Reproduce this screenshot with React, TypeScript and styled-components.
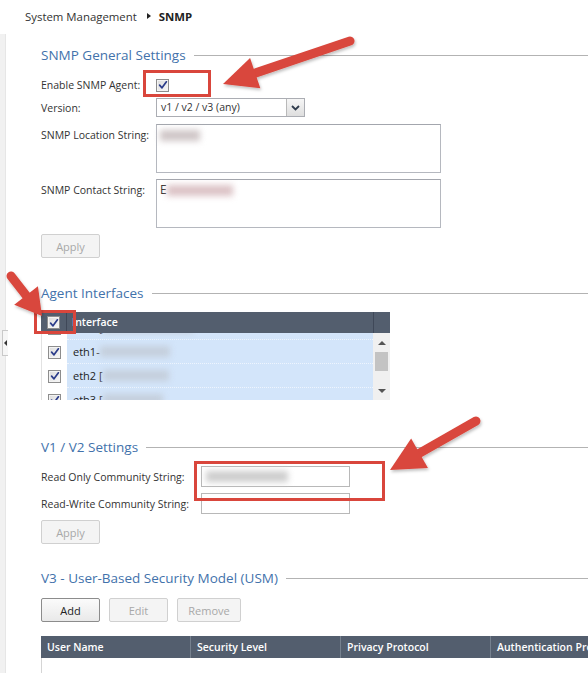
import React from "react"
import styled, { createGlobalStyle } from "styled-components"

const interfaces = [
    {id: 0, name: "eth0 [", hidden: 90},
    {id: 1, name: "eth1-", hidden: 70},
    {id: 2, name: "eth2 [", hidden: 66},
    {id: 3, name: "eth3 [", hidden: 60},
]

const usmColumns = ["User Name", "Security Level", "Privacy Protocol", "Authentication Protocol"]

const CheckMark = () => (
    <svg width="10" height="10" viewBox="0 0 10 10">
        <path d="M1.6 5.2 L4 7.8 L8.4 1.8" stroke="#2b3c8a" strokeWidth="1.7" fill="none" strokeLinecap="round" strokeLinejoin="round" />
    </svg>
)

const Check = () => (
    <CheckBox><CheckMark /></CheckBox>
)

const Arrow = ({ x1, y1, x2, y2, len, half }: { x1: number, y1: number, x2: number, y2: number, len: number, half: number }) => {
    const dx = x2 - x1
    const dy = y2 - y1
    const d = Math.hypot(dx, dy)
    const ux = dx / d
    const uy = dy / d
    const bx = x2 - ux * len
    const by = y2 - uy * len
    const px = -uy * half
    const py = ux * half
    return (
        <g filter="url(#shadow)">
            <line x1={x1} y1={y1} x2={bx + ux * 4} y2={by + uy * 4} stroke="#d9463c" strokeWidth="9" strokeLinecap="round" />
            <polygon points={`${x2},${y2} ${bx + px},${by + py} ${bx - px},${by - py}`} fill="#d9463c" />
        </g>
    )
}

const App = () => {
    return (
        <Page>
            <GlobalStyle />
            <Side>
                <SideTab><TabArrow /></SideTab>
            </Side>
            <Main>
                <Breadcrumb>
                    System Management <Caret /> <b>SNMP</b>
                </Breadcrumb>

                <Section $top={13}>
                    <Legend>SNMP General Settings</Legend>
                    <Form $labelWidth={115} $top={13}>
                        <Label>Enable SNMP Agent:</Label>
                        <Check />
                        <Label>Version:</Label>
                        <Select>
                            <SelectText>v1 / v2 / v3 (any)</SelectText>
                            <SelectButton>
                                <svg width="9" height="6" viewBox="0 0 9 6">
                                    <path d="M1 1 L4.5 4.5 L8 1" stroke="#2f3b4c" strokeWidth="1.8" fill="none" />
                                </svg>
                            </SelectButton>
                        </Select>
                        <Label $top>SNMP Location String:</Label>
                        <TextBox><Redacted $w={40} $tone="#cfc6c7" /></TextBox>
                        <Label $top>SNMP Contact String:</Label>
                        <TextBox>E<Redacted $w={66} $tone="#dcc3c6" /></TextBox>
                        <Button disabled>Apply</Button>
                    </Form>
                </Section>

                <Section $top={25}>
                    <Legend>Agent Interfaces</Legend>
                    <Grid>
                        <GridHead>
                            <HeadCheck><Check /></HeadCheck>
                            <HeadTitle>Interface</HeadTitle>
                            <HeadSpacer />
                        </GridHead>
                        <GridBody>
                            <RowList>
                                {interfaces.map(({id, name, hidden}) => (
                                    <Row key={id}>
                                        <RowCheck><Check /></RowCheck>
                                        <RowName>{name}<Redacted $w={hidden} $tone="#c5cfdc" /></RowName>
                                    </Row>
                                ))}
                            </RowList>
                            <ScrollBar>
                                <ScrollArrow $up />
                                <Thumb />
                                <ScrollArrow />
                            </ScrollBar>
                        </GridBody>
                    </Grid>
                </Section>

                <Section $top={37}>
                    <Legend>V1 / V2 Settings</Legend>
                    <Form $labelWidth={160} $top={9}>
                        <Label>Read Only Community String:</Label>
                        <Input><Redacted $w={82} $tone="#cdcdcd" /></Input>
                        <Label>Read-Write Community String:</Label>
                        <Input />
                        <Button disabled>Apply</Button>
                    </Form>
                </Section>

                <Section $top={24}>
                    <Legend>V3 - User-Based Security Model (USM)</Legend>
                    <Toolbar>
                        <Button>Add</Button>
                        <Button disabled>Edit</Button>
                        <Button disabled $wide>Remove</Button>
                    </Toolbar>
                    <UsmTable>
                        <UsmHead>
                            {usmColumns.map(c => <UsmCell key={c}>{c}</UsmCell>)}
                        </UsmHead>
                        <UsmBody />
                    </UsmTable>
                </Section>
            </Main>

            <Overlay width="588" height="673" viewBox="0 0 588 673">
                <defs>
                    <filter id="shadow" x="-20%" y="-20%" width="140%" height="140%">
                        <feDropShadow dx="1" dy="2" stdDeviation="1.5" floodColor="#000" floodOpacity="0.25" />
                    </filter>
                </defs>
                <rect x="144.5" y="71.5" width="65" height="24" fill="none" stroke="#d9463c" strokeWidth="3" />
                <rect x="35.5" y="311.5" width="39" height="21" fill="none" stroke="#d9463c" strokeWidth="3" />
                <rect x="195.5" y="462.5" width="188" height="37" fill="none" stroke="#d9463c" strokeWidth="3" />
                <Arrow x1={350} y1={41} x2={223} y2={84} len={34} half={16} />
                <Arrow x1={11} y1={276} x2={42} y2={316} len={26} half={15} />
                <Arrow x1={476} y1={421} x2={390} y2={470} len={34} half={17} />
            </Overlay>
        </Page>
    )
}
export default App


const GlobalStyle = createGlobalStyle`
    html, body {
        margin: 0;
        padding: 0;
        background: #fff;
    }
    body {
        font-family: "Open Sans", "Noto Sans", sans-serif;
        font-size: 10.5px;
        color: #333;
    }
`

const Page = styled.div`
    position: relative;
    display: flex;
    width: 588px;
    height: 673px;
    overflow: hidden;
    background: #fff;
`

const Side = styled.div`
    flex: 0 0 6px;
    width: 6px;
    min-width: 0;
    box-sizing: border-box;
    margin: 34px 1px 0 0;
    background: #f1f1f1;
    border-right: 1px solid #e6e6e6;
`

const SideTab = styled.div`
    display: flex;
    align-items: center;
    justify-content: center;
    box-sizing: border-box;
    width: 6px;
    height: 26px;
    margin: 296px 0 0 2px;
    background: #f6f6f6;
    border: 1px solid #c9c9c9;
    border-right: none;
`

const TabArrow = styled.span`
    width: 0;
    height: 0;
    border-top: 3px solid transparent;
    border-bottom: 3px solid transparent;
    border-right: 3px solid #333;
`

const Main = styled.div`
    flex: 1;
    padding-left: 18px;
    min-width: 0;
`

const Breadcrumb = styled.div`
    display: flex;
    align-items: center;
    gap: 6px;
    height: 32px;
    font-size: 11.4px;
    color: #333;
    b {
        font-weight: 700;
        color: #222;
    }
`

const Caret = styled.span`
    width: 0;
    height: 0;
    margin: 0 2px 0 4px;
    border-top: 3.5px solid transparent;
    border-bottom: 3.5px solid transparent;
    border-left: 4px solid #222;
`

const Section = styled.section<{ $top: number }>`
    margin-top: ${({ $top }) => $top}px;
    padding-left: 16px;
`

const Legend = styled.div`
    display: flex;
    align-items: center;
    gap: 8px;
    height: 20px;
    font-size: 13.5px;
    color: #4272ab;
    white-space: nowrap;
    &::after {
        content: "";
        flex: 1;
        height: 1px;
        background: #b3b3b3;
    }
`

const Form = styled.div<{ $labelWidth: number, $top: number }>`
    display: grid;
    grid-template-columns: ${({ $labelWidth }) => $labelWidth}px auto;
    justify-content: start;
    align-items: center;
    row-gap: 6px;
    margin-top: ${({ $top }) => $top}px;
`

const Label = styled.div<{ $top?: boolean }>`
    align-self: ${({ $top }) => ($top ? "start" : "center")};
    padding-top: ${({ $top }) => ($top ? "4px" : "0")};
    font-size: 10.5px;
    line-height: 14px;
    color: #333;
    white-space: nowrap;
`

const CheckBox = styled.span`
    display: inline-flex;
    align-items: center;
    justify-content: center;
    box-sizing: border-box;
    width: 13px;
    height: 13px;
    border: 1px solid #8d8d8d;
    background: linear-gradient(135deg, #dcdcdc, #f7f7f7);
    box-shadow: inset 0 0 0 1px #f3f3f3;
`

const Select = styled.div`
    display: flex;
    box-sizing: border-box;
    width: 149px;
    height: 19px;
    margin-bottom: 1px;
    border: 1px solid #abadb3;
    background: #fff;
`

const SelectText = styled.div`
    flex: 1;
    padding-left: 4px;
    line-height: 17px;
    font-size: 10.5px;
    color: #333;
`

const SelectButton = styled.div`
    display: flex;
    align-items: center;
    justify-content: center;
    width: 17px;
    border-left: 1px solid #b9b9b9;
    background: linear-gradient(#f6f6f6, #dedede);
`

const TextBox = styled.div`
    box-sizing: border-box;
    width: 285px;
    height: 49px;
    padding: 3px 3px;
    border: 1px solid #b5b8bf;
    border-top-color: #a3a6ad;
    font-size: 12px;
    line-height: 14px;
    color: #333;
`

const Input = styled.div`
    display: flex;
    align-items: center;
    box-sizing: border-box;
    width: 149px;
    height: 21px;
    padding: 0 4px;
    border: 1px solid #b8b8b8;
    background: #fff;
`

const Redacted = styled.span<{ $w: number, $tone: string }>`
    display: inline-block;
    vertical-align: middle;
    width: ${({ $w }) => $w}px;
    height: 11px;
    background: ${({ $tone }) => $tone};
    filter: blur(3px);
`

const Button = styled.button<{ $wide?: boolean }>`
    box-sizing: border-box;
    width: ${({ $wide }) => ($wide ? 64 : 59)}px;
    height: 24px;
    padding: 0;
    border: 1px solid #8c8c8c;
    border-radius: 2px;
    background: linear-gradient(#fbfbfb, #e9e9e9);
    font-family: inherit;
    font-size: 11px;
    color: #222;
    &:disabled {
        border-color: #d0d0d0;
        background: #f4f4f4;
        color: #a8a8a8;
    }
`

const Grid = styled.div`
    width: 349px;
    margin-top: 9px;
`

const GridHead = styled.div`
    display: flex;
    height: 21px;
    background: #535e6e;
`

const HeadCheck = styled.div`
    display: flex;
    align-items: center;
    justify-content: center;
    width: 25px;
    border-right: 1px solid #3f4858;
`

const HeadTitle = styled.div`
    flex: 1;
    padding-left: 5px;
    line-height: 21px;
    font-size: 10.5px;
    font-weight: 600;
    color: #fff;
`

const HeadSpacer = styled.div`
    width: 16px;
    border-left: 1px solid #3f4858;
`

const GridBody = styled.div`
    display: flex;
    height: 67px;
    overflow: hidden;
`

const RowList = styled.div`
    flex: 1;
    overflow: hidden;
`

const Row = styled.div`
    display: grid;
    grid-template-columns: 26px 1fr;
    height: 24px;
    &:first-child {
        margin-top: -17px;
    }
`

const RowCheck = styled.div`
    display: flex;
    align-items: center;
    justify-content: center;
    background: #fff;
    border-left: 1px solid #e2e2e2;
`

const RowName = styled.div`
    display: flex;
    align-items: center;
    padding-left: 6px;
    background: #d3e5fa;
    border-bottom: 1px dotted #eef5fe;
    font-size: 11px;
    color: #222;
    white-space: nowrap;
`

const ScrollBar = styled.div`
    display: flex;
    flex-direction: column;
    align-items: center;
    width: 17px;
    background: #f0f0f0;
`

const ScrollArrow = styled.span<{ $up?: boolean }>`
    width: 0;
    height: 0;
    margin: ${({ $up }) => ($up ? "8px 0 0" : "auto 0 7px")};
    border-left: 4px solid transparent;
    border-right: 4px solid transparent;
    ${({ $up }) => ($up ? "border-bottom: 4px solid #555;" : "border-top: 4px solid #555;")}
`

const Thumb = styled.div`
    width: 13px;
    height: 19px;
    margin-top: 7px;
    background: #c3c3c3;
`

const Toolbar = styled.div`
    display: flex;
    gap: 9px;
    margin-top: 10px;
`

const UsmTable = styled.div`
    margin-top: 14px;
`

const UsmHead = styled.div`
    display: grid;
    grid-template-columns: repeat(4, 150px);
    height: 22px;
    background: #535e6e;
`

const UsmCell = styled.div`
    padding-left: 6px;
    border-right: 1px solid #76818f;
    line-height: 22px;
    font-size: 10.5px;
    font-weight: 600;
    color: #fff;
    white-space: nowrap;
    overflow: hidden;
`

const UsmBody = styled.div`
    height: 40px;
    border-left: 1px solid #d5d5d5;
`

const Overlay = styled.svg`
    position: absolute;
    left: 0;
    top: 0;
    pointer-events: none;
`
